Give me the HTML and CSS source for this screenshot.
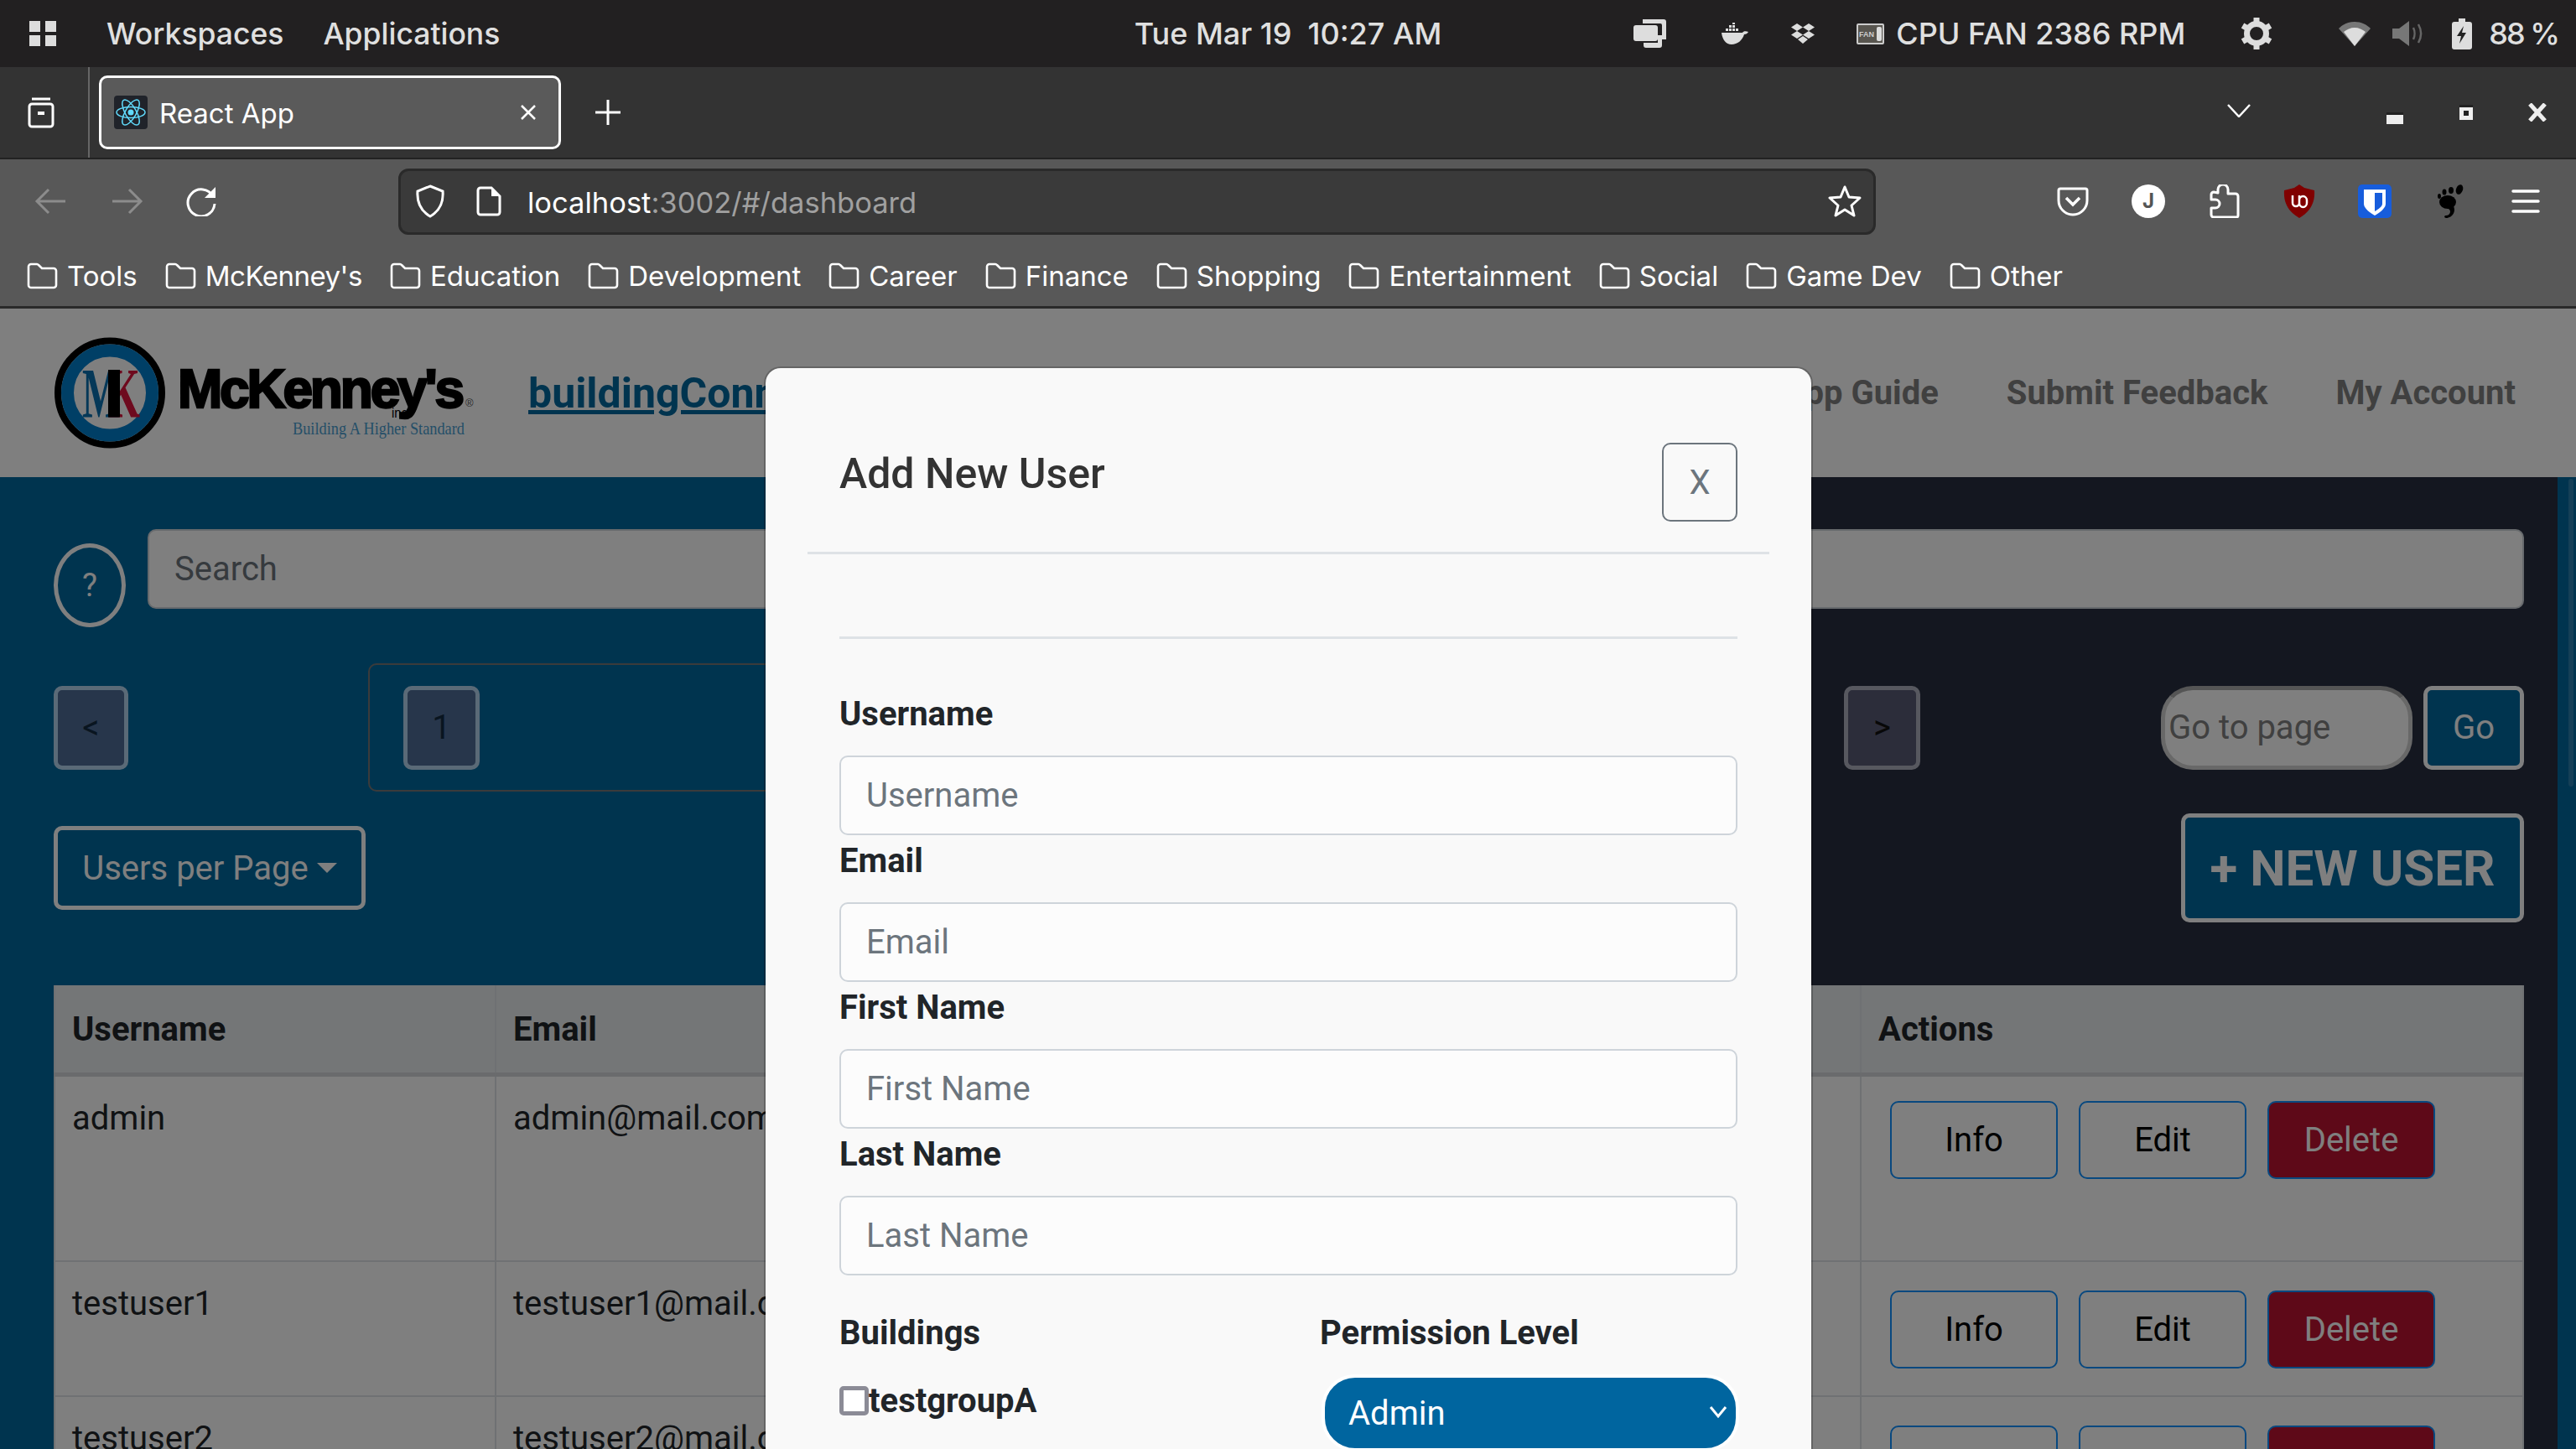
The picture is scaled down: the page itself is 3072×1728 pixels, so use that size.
FILE: index.html
```html
<!doctype html>
<html lang="en">
<head>
	<meta charset="utf-8">
	<title>React App</title>
	<link rel="stylesheet" href="styles.css">
</head>

<body>
	<svg class="defs" width="0" height="0">
		<symbol id="folder" viewBox="0 0 37 32">
			<path d="M2 5a3 3 0 0 1 3-3h7a3 3 0 0 1 2 1l4 4h14a3 3 0 0 1 3 3v17a3 3 0 0 1-3 3H5a3 3 0 0 1-3-3z" fill="none" stroke="#fff" stroke-width="2.6"/>
		</symbol>
	</svg>

	<!-- desktop top bar -->
	<div class="topbar">
		<div class="top-left">
			<svg class="apps" width="32" height="30" viewBox="0 0 32 30" fill="#ddd"><rect width="13" height="13" x="0" y="0"/><rect width="13" height="13" x="19" y="0"/><rect width="13" height="13" x="0" y="17"/><rect width="13" height="13" x="19" y="17"/></svg>
			<span class="top-menu">Workspaces</span>
			<span class="top-menu">Applications</span>
		</div>
		<div class="clock">Tue Mar 19&nbsp; 10:27 AM</div>
		<div class="tray">
			<svg class="tray-win" width="39" height="34" viewBox="0 0 39 34" fill="#ddd"><path d="M11 0h25a3 3 0 0 1 3 3v21h-5V7a2 2 0 0 0-2-2H11z"/><rect x="0" y="7" width="29" height="19" rx="3"/><path d="M12 28h17v-9h5v12a3 3 0 0 1-3 3H15a3 3 0 0 1-3-3z"/></svg>
			<svg class="tray-docker" width="32" height="26" viewBox="0 0 32 26" fill="#ddd"><path d="M0 12h25c1-2 4-2 7-1-1 2-3 3-5 3-2 7-8 12-15 12C5 26 1 20 0 12z"/><rect x="5" y="7" width="3" height="3"/><rect x="9" y="7" width="3" height="3"/><rect x="13" y="7" width="3" height="3"/><rect x="17" y="7" width="3" height="3"/><rect x="9" y="3" width="3" height="3"/><rect x="13" y="3" width="3" height="3"/><rect x="13" y="0" width="3" height="2"/></svg>
			<svg class="tray-drop" width="28" height="24" viewBox="0 0 28 24" fill="#ddd"><path d="M7 0l7 4.500-7 4.500-7-4.500zM21 0l7 4.500-7 4.500-7-4.500zM7 9l7 4.500-7 4.500-7-4.500zM21 9l7 4.500-7 4.500-7-4.500zM14 15l6 4-6 5-6-5z"/></svg>
			<svg class="tray-fan" width="33" height="25" viewBox="0 0 33 25"><rect x="1" y="1" width="31" height="23" rx="1" fill="#58554f" stroke="#ccc" stroke-width="2"/><rect x="24" y="4" width="6" height="17" rx="2" fill="#ddd"/><text x="3" y="16" class="fan-label">FAN</text></svg>
			<span class="tray-text fan-text">CPU FAN 2386 RPM</span>
			<svg class="tray-gear" width="40" height="40" viewBox="0 0 40 40"><circle cx="20" cy="20" r="11.500" fill="none" stroke="#ddd" stroke-width="7"/><g stroke="#ddd" stroke-width="7"><path d="M20 1v7M20 32v7M3.500 10.500l6 3.500M30.500 26l6 3.500M3.500 29.500l6-3.500M30.500 14l6-3.500"/></g></svg>
			<svg class="tray-wifi" width="38" height="29" viewBox="0 0 38 29"><path d="M19 0C11 0 5 3 0 8l19 21L38 8C33 3 27 0 19 0z" fill="#777"/><path d="M19 7c-5 0-9 2-13 5l13 17 13-17c-4-3-8-5-13-5z" fill="#ddd"/></svg>
			<svg class="tray-vol" width="37" height="30" viewBox="0 0 37 30"><path d="M0 9h8l12-9v30L8 21H0z" fill="#777"/><path d="M25 8c2 4 2 10 0 14M31 4c4 7 4 15 0 22" fill="none" stroke="#666" stroke-width="2.500"/></svg>
			<svg class="tray-bat" width="24" height="37" viewBox="0 0 24 37"><path d="M8 0h8v4h5a3 3 0 0 1 3 3v27a3 3 0 0 1-3 3H3a3 3 0 0 1-3-3V7a3 3 0 0 1 3-3h5z" fill="#ddd"/><path d="M14 9L6 21h5l-2 9 8-13h-5z" fill="#222"/></svg>
			<span class="tray-text bat-text">88 %</span>
		</div>
	</div>

	<!-- firefox -->
	<div class="tabbar">
		<div class="tab-list">
			<svg width="32" height="38" viewBox="0 0 32 38" fill="none" stroke="#fff" stroke-width="3"><path d="M5 3h22"/><rect x="2" y="9" width="28" height="27" rx="3"/><path d="M12 20h8" stroke-width="4"/></svg>
		</div>
		<div class="tab">
			<svg class="favicon" width="40" height="40" viewBox="0 0 40 40"><rect width="40" height="40" rx="4" fill="#20232a"/><g fill="none" stroke="#61dafb" stroke-width="1.500"><ellipse cx="20" cy="20" rx="17" ry="6.500"/><ellipse cx="20" cy="20" rx="17" ry="6.500" transform="rotate(60 20 20)"/><ellipse cx="20" cy="20" rx="17" ry="6.500" transform="rotate(120 20 20)"/></g><circle cx="20" cy="20" r="3.500" fill="#61dafb"/></svg>
			<span class="tab-title">React App</span>
			<svg class="tab-close" width="20" height="20" viewBox="0 0 20 20"><path d="M2 2l16 16M18 2L2 18" stroke="#fff" stroke-width="2.500"/></svg>
		</div>
		<svg class="new-tab" width="30" height="30" viewBox="0 0 30 30"><path d="M15 0v30M0 15h30" stroke="#fff" stroke-width="3"/></svg>
		<svg class="tab-chevron" width="28" height="16" viewBox="0 0 28 16"><path d="M1 1l13 14L27 1" fill="none" stroke="#fff" stroke-width="2.500"/></svg>
		<svg class="win-min" width="20" height="14" viewBox="0 0 20 14"><rect width="20" height="3" fill="#222"/><rect y="3" width="20" height="11" fill="#eee"/></svg>
		<svg class="win-max" width="16" height="18" viewBox="0 0 16 18"><rect width="16" height="18" fill="#eee"/><rect width="16" height="3" fill="#222"/><rect x="5" y="7" width="6" height="6" fill="#222"/></svg>
		<svg class="win-close" width="22" height="22" viewBox="0 0 22 22"><path d="M2 1l18 20M20 1L2 21" stroke="#eee" stroke-width="5"/></svg>
	</div>

	<div class="toolbar">
		<div class="nav-row">
			<svg class="nav-btn" width="40" height="32" viewBox="0 0 40 32" fill="none" stroke="#8c8c8c" stroke-width="3"><path d="M37 16H3M17 2L3 16l14 14"/></svg>
			<svg class="nav-btn" width="40" height="32" viewBox="0 0 40 32" fill="none" stroke="#8c8c8c" stroke-width="3"><path d="M3 16h34M23 2l14 14-14 14"/></svg>
			<svg class="nav-btn" width="40" height="36" viewBox="0 0 40 36" fill="none" stroke="#fff" stroke-width="3"><path d="M33 12a16 16 0 1 0 2 9"/><path d="M36 1v13H23z" fill="#fff" stroke="none"/></svg>
			<div class="urlbar">
				<svg class="url-shield" width="36" height="40" viewBox="0 0 36 40"><path d="M18 2l15 6c1 13-3 23-15 30C6 31 2 21 3 8z" fill="none" stroke="#fff" stroke-width="3"/></svg>
				<svg class="url-page" width="30" height="36" viewBox="0 0 30 36"><path d="M5 2h13l10 10v19a3 3 0 0 1-3 3H5a3 3 0 0 1-3-3V5a3 3 0 0 1 3-3z" fill="none" stroke="#fff" stroke-width="3"/><path d="M18 2v10h10z" fill="#fff"/></svg>
				<span class="url-text">localhost<span class="url-rest">:3002/#/dashboard</span></span>
				<svg class="url-star" width="40" height="38" viewBox="0 0 40 38"><path d="M20 2l5 12 13 1-10 9 3 12-11-7-11 7 3-12-10-9 13-1z" fill="none" stroke="#fff" stroke-width="3" stroke-linejoin="round"/></svg>
			</div>
			<div class="ext-icons">
				<svg width="40" height="40" viewBox="0 0 40 40" fill="none" stroke="#fff" stroke-width="3"><path d="M5 5h30a2 2 0 0 1 2 2v12a17 17 0 0 1-34 0V7a2 2 0 0 1 2-2z"/><path d="M12 16l8 8 8-8" stroke-width="3.500"/></svg>
				<svg width="40" height="40" viewBox="0 0 40 40"><ellipse cx="20" cy="20" rx="20" ry="20" fill="#fff"/><text x="20" y="28" class="ext-j">J</text></svg>
				<svg width="40" height="40" viewBox="0 0 40 40"><path d="M13 10V6a6 6 0 0 1 12 0v5h9a3 3 0 0 1 3 3v23a2 2 0 0 1-2 2H8a3 3 0 0 1-3-3v-8h5a5 5 0 0 0 0-10H5v-6a3 3 0 0 1 3-3z" fill="none" stroke="#fff" stroke-width="3" stroke-linejoin="round"/></svg>
				<svg width="40" height="40" viewBox="0 0 40 40"><path d="M20 0l6 4 12 3c1 14-4 25-18 33C6 32 1 21 2 7l12-3z" fill="#800000"/><path d="M12 13v9a4 4 0 0 0 8 0v-9M20 22a4.500 5 0 1 0 9 0v-3a4.500 5 0 1 0-9 0" fill="none" stroke="#fff" stroke-width="2.500"/></svg>
				<svg width="40" height="40" viewBox="0 0 40 40"><rect width="40" height="40" rx="5" fill="#175ddc"/><path d="M7 6h26v17c0 5-6 10-13 14C13 33 7 28 7 23z" fill="#fff"/><path d="M20 10h9v13c0 3-4 6-9 9z" fill="#175ddc"/></svg>
				<svg width="40" height="40" viewBox="0 0 40 40"><ellipse cx="17" cy="21" rx="10" ry="8"/><path d="M9 22c6-4 16 0 16 8 0 6-5 10-10 10-2 0-3-3 0-3 3 0 5-2 5-5 0-4-8-4-11-10z"/><ellipse cx="31" cy="6" rx="4" ry="6" transform="rotate(20 31 6)"/><ellipse cx="21" cy="7" rx="3" ry="4"/><ellipse cx="13" cy="9" rx="2.500" ry="3.500"/><ellipse cx="7" cy="14" rx="2" ry="3"/></svg>
				<svg width="40" height="40" viewBox="0 0 40 40"><path d="M5 8h30M5 20h30M5 32h30" stroke="#fff" stroke-width="3.500" stroke-linecap="round"/></svg>
			</div>
		</div>
		<div class="bookmarks">
			<span class="bookmark"><svg width="37" height="32"><use href="#folder"/></svg>Tools</span>
			<span class="bookmark tight"><svg width="37" height="32"><use href="#folder"/></svg>McKenney's</span>
			<span class="bookmark"><svg width="37" height="32"><use href="#folder"/></svg>Education</span>
			<span class="bookmark"><svg width="37" height="32"><use href="#folder"/></svg>Development</span>
			<span class="bookmark"><svg width="37" height="32"><use href="#folder"/></svg>Career</span>
			<span class="bookmark"><svg width="37" height="32"><use href="#folder"/></svg>Finance</span>
			<span class="bookmark"><svg width="37" height="32"><use href="#folder"/></svg>Shopping</span>
			<span class="bookmark"><svg width="37" height="32"><use href="#folder"/></svg>Entertainment</span>
			<span class="bookmark"><svg width="37" height="32"><use href="#folder"/></svg>Social</span>
			<span class="bookmark"><svg width="37" height="32"><use href="#folder"/></svg>Game Dev</span>
			<span class="bookmark"><svg width="37" height="32"><use href="#folder"/></svg>Other</span>
		</div>
	</div>

	<!-- the web page itself -->
	<section class="page">
		<header class="site-header">
			<svg class="logo" width="520" height="140" viewBox="0 0 520 140">
				<circle cx="67" cy="69.500" r="62" fill="#fff" stroke="#000" stroke-width="8"/>
				<circle cx="67" cy="69.500" r="50.500" fill="none" stroke="#007ecc" stroke-width="15"/>
				<text x="34" y="98.500" class="logo-m" textLength="45" lengthAdjust="spacingAndGlyphs">M</text>
				<text x="65" y="98.500" class="logo-k" textLength="38" lengthAdjust="spacingAndGlyphs">K</text>
				<rect x="65" y="42" width="14" height="56.500" fill="#000"/>
				<text x="148" y="86.500" class="logo-name" textLength="342" lengthAdjust="spacing">McKenney's</text>
				<text x="403" y="98.500" class="logo-inc" textLength="19" lengthAdjust="spacingAndGlyphs">inc</text>
				<text x="491" y="86" class="logo-reg">®</text>
				<text x="285" y="118.500" class="logo-tag" textLength="205" lengthAdjust="spacingAndGlyphs">Building A Higher Standard</text>
			</svg>
			<a class="brand-link">buildingConnect</a>
			<nav class="site-nav">
				<a>App Guide</a>
				<a>Submit Feedback</a>
				<a>My Account</a>
			</nav>
		</header>

		<div class="main-wrap">
			<main class="content">
				<div class="search-row">
					<button class="help-btn">?</button>
					<input class="search-input" placeholder="Search">
				</div>

				<div class="pager-row">
					<button class="page-btn prev-btn">&lt;</button>
					<div class="pager">
						<button class="page-btn num-btn">1</button>
					</div>
					<button class="page-btn next-btn">&gt;</button>
					<input class="goto-input" placeholder="Go to page">
					<button class="go-btn">Go</button>
				</div>

				<div class="action-row">
					<button class="per-page">Users per Page<span class="caret"></span></button>
					<button class="new-user">+ NEW USER</button>
				</div>

				<table class="users">
					<colgroup>
						<col class="col-user">
						<col class="col-email">
						<col>
						<col class="col-actions">
					</colgroup>
					<thead>
						<tr><th>Username</th><th>Email</th><th></th><th>Actions</th></tr>
					</thead>
					<tbody>
						<tr class="tall">
							<td>admin</td><td>admin@mail.com</td><td></td>
							<td><div class="row-btns"><button>Info</button><button>Edit</button><button class="del">Delete</button></div></td>
						</tr>
						<tr>
							<td>testuser1</td><td>testuser1@mail.com</td><td></td>
							<td><div class="row-btns"><button>Info</button><button>Edit</button><button class="del">Delete</button></div></td>
						</tr>
						<tr>
							<td>testuser2</td><td>testuser2@mail.com</td><td></td>
							<td><div class="row-btns"><button>Info</button><button>Edit</button><button class="del">Delete</button></div></td>
						</tr>
					</tbody>
				</table>
			</main>
			<div class="scroll-strip"><div class="scroll-thumb"></div></div>
		</div>

		<!-- overlay and dialog -->
		<div class="backdrop"></div>
		<div class="modal">
			<div class="modal-head">
				<h4>Add New User</h4>
				<button class="modal-x">X</button>
			</div>
			<div class="modal-body">
				<hr>
				<label>Username</label>
				<input placeholder="Username">
				<label>Email</label>
				<input placeholder="Email">
				<label>First Name</label>
				<input placeholder="First Name">
				<label>Last Name</label>
				<input placeholder="Last Name">
				<div class="modal-cols">
					<div class="col-build">
						<label>Buildings</label>
						<div class="check-row"><span class="checkbox"></span>testgroupA</div>
					</div>
					<div class="col-perm">
						<label>Permission Level</label>
						<div class="select-wrap">
							<select><option>Admin</option></select>
							<svg width="22" height="16" viewBox="0 0 22 16"><path d="M2 2l9 11 9-11" fill="none" stroke="#fff" stroke-width="3"/></svg>
						</div>
					</div>
				</div>
			</div>
		</div>
	</section>
</body>
</html>
```

FILE: styles.css
```css
* {
	margin: 0;
	padding: 0;
	box-sizing: border-box;
}

html, body {
	width: 3072px;
	height: 1728px;
	overflow: hidden;
}

body {
	background: #00689e;
	font-family: Roboto, "Liberation Sans", sans-serif;
	font-size: 40px;
	color: #212529;
}

button, input, select {
	font-family: Roboto, "Liberation Sans", sans-serif;
	font-size: 40px;
}

.defs {
	position: absolute;
}

/* desktop bar */
.topbar {
	height: 80px;
	background: #222021;
	color: #e0e0e0;
	display: grid;
	grid-template-columns: 1fr auto 1fr;
	align-items: center;
	font-family: Inter, "Liberation Sans", sans-serif;
	font-size: 36px;
	font-weight: 500;
}
.top-left {
	display: flex;
	align-items: center;
	font-size: 35.500px;
}
.apps {
	margin-left: 35px;
	margin-right: 60px;
}
.top-menu {
	margin-right: 47px;
}
.tray {
	display: flex;
	align-items: center;
	justify-content: flex-end;
	padding-right: 21px;
}
.tray-docker { margin-left: 66px; }
.tray-drop { margin-left: 51px; }
.tray-fan { margin-left: 50px; }
.fan-text { margin-left: 14px; }
.tray-gear { margin-left: 65px; }
.tray-wifi { margin-left: 78px; }
.tray-vol { margin-left: 26px; }
.tray-bat { margin-left: 34px; }
.bat-text {
	margin-left: 20px;
	letter-spacing: -2px;
}
.fan-label {
	font-family: "Liberation Sans", sans-serif;
	font-size: 9px;
	font-weight: 700;
	fill: #ccc;
}

/* browser tabs */
.tabbar {
	height: 110px;
	background: #333;
	border-bottom: 2px solid #222;
	display: flex;
	align-items: center;
}
.tab-list {
	width: 107px;
	height: 108px;
	padding-right: 7px;
	border-right: 2px solid #666;
	display: flex;
	align-items: center;
	justify-content: center;
}
.tab {
	width: 551px;
	height: 88px;
	margin-left: 11px;
	background: #5a5a5a;
	border: 3px solid #fff;
	border-radius: 10px;
	display: flex;
	align-items: center;
	padding-left: 15px;
	color: #fff;
	font-family: Inter, "Liberation Sans", sans-serif;
	font-size: 33px;
}
.tab-title {
	margin-left: 14px;
	margin-top: 2px;
}
.tab-close {
	margin-left: auto;
	margin-right: 26px;
}
.new-tab {
	margin-left: 41px;
}
.tab-chevron {
	margin-left: auto;
	margin-top: -4px;
}
.win-min {
	margin-left: 162px;
	margin-top: 14px;
}
.win-max {
	margin-left: 67px;
}
.win-close {
	margin-left: 66px;
	margin-right: 35px;
}

/* toolbar */
.toolbar {
	height: 178px;
	background: #585858;
	border-bottom: 3px solid #2a2a2a;
	color: #fff;
	font-family: Inter, "Liberation Sans", sans-serif;
	font-size: 33px;
}
.nav-row {
	height: 100px;
	display: flex;
	align-items: center;
	padding-left: 41px;
	gap: 50px;
}
.urlbar {
	width: 1762px;
	height: 79px;
	margin-left: 164px;
	background: #3a3a3a;
	border: 3px solid #2a2a2a;
	border-radius: 12px;
	display: flex;
	align-items: center;
	padding-left: 17px;
	font-size: 34.500px;
}
.url-page {
	margin-left: 37px;
}
.url-text {
	margin-left: 31px;
	margin-top: 2px;
}
.url-rest {
	color: #a0a0a0;
}
.url-star {
	margin-left: auto;
	margin-right: 14px;
}
.ext-icons {
	display: flex;
	align-items: center;
	gap: 50px;
	margin-left: 165px;
}
.ext-j {
	font-family: Inter, "Liberation Sans", sans-serif;
	font-size: 24px;
	font-weight: 700;
	fill: #555;
	text-anchor: middle;
}
.bookmarks {
	display: flex;
	align-items: center;
	gap: 33px;
	height: 77px;
	padding-left: 32px;
}
.bookmark {
	display: flex;
	align-items: center;
	gap: 11px;
}
.tight {
	letter-spacing: -0.500px;
}

/* page header */
.page {
	position: relative;
	height: 1360px;
	overflow: hidden;
}
.site-header {
	height: 201px;
	background: #fff;
	display: flex;
	align-items: center;
	padding-left: 64px;
}
.logo-m, .logo-k {
	font-family: "Liberation Serif", serif;
	font-size: 85px;
	font-weight: 700;
}
.logo-m { fill: #0a70b0; }
.logo-k { fill: #dc143c; }
.logo-name {
	font-family: "Liberation Sans", sans-serif;
	font-size: 64px;
	font-weight: 700;
	stroke: #000;
	stroke-width: 2.500px;
}
.logo-inc {
	font-family: "Liberation Sans", sans-serif;
	font-size: 17px;
}
.logo-reg {
	font-family: "Liberation Sans", sans-serif;
	font-size: 13px;
	fill: #555;
}
.logo-tag {
	font-family: "Liberation Serif", serif;
	font-size: 22px;
	fill: #4a9ed0;
}
.brand-link {
	margin-left: 46px;
	color: #00689e;
	font-size: 50px;
	font-weight: 700;
	text-decoration: underline;
}
.site-nav {
	margin-left: auto;
	display: flex;
	gap: 81px;
	padding-right: 72px;
	font-weight: 700;
	font-size: 40px;
	color: #808080;
}

/* main area */
.main-wrap {
	display: flex;
	height: 1159px;
}
.content {
	width: 3050px;
	padding: 62px 40px 0 64px;
	background: linear-gradient(90deg, #00689e 50%, #282e40 50%);
}
.scroll-strip {
	width: 22px;
	background: #00689e;
	padding: 2px 3px 0 13px;
}
.scroll-thumb {
	height: 367px;
	border-radius: 3px;
	background: #2a7fae;
}

.search-row {
	display: flex;
	align-items: flex-start;
	gap: 26px;
	height: 117px;
}
.help-btn {
	width: 86px;
	height: 100px;
	margin-top: 17px;
	border: 5px solid #fff;
	border-radius: 50%;
	background: transparent;
	color: #fff;
	font-size: 38px;
}
.search-input {
	flex: 1;
	height: 95px;
	padding: 0 30px;
	background: #fff;
	border: 2px solid #ced4da;
	border-radius: 10px;
}
.search-input::placeholder {
	color: #6c757d;
}

.pager-row {
	display: flex;
	align-items: center;
	height: 153px;
	margin-top: 43px;
}
.page-btn {
	height: 100px;
	border-radius: 10px;
	border: 5px solid #b4d4ee;
	background: #4e6c96;
	color: #122a40;
}
.prev-btn {
	width: 89px;
}
.pager {
	width: 1600px;
	height: 153px;
	margin-left: 286px;
	padding-left: 40px;
	border: 2px solid #777;
	border-radius: 10px;
	display: flex;
	align-items: center;
}
.num-btn {
	width: 91px;
}
.next-btn {
	width: 91px;
	margin-left: 160px;
	background: #585a74;
	border-color: #aeb0be;
	color: #111;
}
.goto-input {
	width: 300px;
	height: 100px;
	margin-left: 287px;
	padding-left: 4px;
	background: #fff;
	border-radius: 38px;
	border: 5px solid #d0d0d0;
	border-top-color: #aaa;
}
.goto-input::placeholder {
	color: #808080;
}
.go-btn {
	width: 120px;
	height: 100px;
	margin-left: 13px;
	background: #00689e;
	border: 5px solid #fff;
	border-radius: 10px;
	color: #fff;
}

.action-row {
	display: flex;
	align-items: center;
	justify-content: space-between;
	margin-top: 26px;
}
.per-page {
	width: 372px;
	height: 100px;
	border: 5px solid #fff;
	border-radius: 10px;
	background: transparent;
	color: #fff;
}
.caret {
	display: inline-block;
	margin-left: 10px;
	vertical-align: 8px;
	border-left: 12px solid transparent;
	border-right: 12px solid transparent;
	border-top: 12px solid #fff;
}
.new-user {
	width: 409px;
	height: 130px;
	background: #00689e;
	border: 5px solid #fff;
	border-radius: 10px;
	color: #fff;
	font-size: 60px;
	font-weight: 700;
}

/* user table */
.users {
	width: 2946px;
	margin-top: 75px;
	border-collapse: collapse;
	table-layout: fixed;
	background: #fff;
}
.col-user { width: 526px; }
.col-email { width: 700px; }
.col-actions { width: 790px; }
.users th, .users td {
	border: 2px solid #dee2e6;
	padding: 20px 20px;
	text-align: left;
	vertical-align: top;
	line-height: 60px;
}
.users th {
	height: 106px;
	padding-top: 23px;
	background: #e9ecef;
	border-top: 0;
	border-bottom: 5px solid #d5d7da;
	font-weight: 700;
}
.users .tall td {
	height: 223px;
}
.row-btns {
	display: flex;
	gap: 25px;
	padding: 14px 14px 12px;
}
.tall .row-btns {
	padding-top: 9px;
}
.row-btns button {
	width: 200px;
	height: 93px;
	background: #fff;
	border: 2px solid #1090ff;
	border-radius: 10px;
	color: #000;
}
.row-btns .del {
	background: #bc1230;
	color: #fff;
}

/* dialog */
.backdrop {
	position: absolute;
	inset: 0;
	background: rgba(0, 0, 0, 0.5);
}
.modal {
	position: absolute;
	left: 913px;
	top: 71px;
	width: 1247px;
	height: 1400px;
	background: #f9f9f9;
	border-radius: 18px 18px 0 0;
	box-shadow: 0 0 0 2px rgba(0, 0, 0, 0.2);
}
.modal-head {
	display: flex;
	justify-content: space-between;
	align-items: flex-start;
	margin: 0 50px;
	padding: 89px 38px 36px 38px;
	border-bottom: 3px solid #dee2e6;
}
.modal-head h4 {
	font-size: 50px;
	font-weight: 500;
	line-height: 75px;
	color: #333;
}
.modal-x {
	width: 90px;
	height: 94px;
	background: transparent;
	border: 2px solid #6c757d;
	border-radius: 10px;
	color: #6c757d;
}
.modal-body {
	padding: 0 88px;
}
.modal-body hr {
	margin: 98px 0 59px;
	border: 0;
	border-top: 3px solid #dee2e6;
}
.modal-body label {
	display: block;
	height: 61px;
	margin-bottom: 19px;
	font-weight: 700;
	line-height: 62px;
}
.modal-body input {
	display: block;
	width: 100%;
	height: 95px;
	padding: 0 30px;
	background: #fcfcfc;
	border: 2px solid #ced4da;
	border-radius: 10px;
	color: #212529;
}
.modal-body input::placeholder {
	color: #6c757d;
}
.modal-cols {
	display: flex;
	margin-top: 38px;
}
.col-build {
	width: 573px;
}
.col-perm {
	flex: 1;
}
.check-row {
	display: flex;
	align-items: center;
	margin-top: 28px;
	height: 44px;
	font-weight: 700;
}
.checkbox {
	width: 35px;
	height: 35px;
	background: #fff;
	border: 5px solid #8b8b96;
	border-radius: 5px;
}
.select-wrap {
	position: relative;
	margin-left: 2px;
	margin-right: -2px;
}
.select-wrap select {
	display: block;
	width: 100%;
	height: 92px;
	padding-left: 28px;
	appearance: none;
	background: #00659f;
	border: 4px solid #fff;
	border-radius: 40px;
	color: #fff;
}
.select-wrap svg {
	position: absolute;
	right: 14px;
	top: 37px;
}
```
